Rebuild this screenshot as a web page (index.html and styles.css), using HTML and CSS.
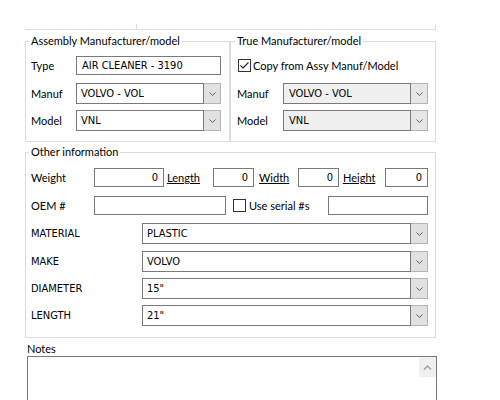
FILE: index.html
```html
<!DOCTYPE html>
<html lang="en">
<head>
  <meta charset="UTF-8" />
  <title>Part details</title>
  <link rel="stylesheet" href="styles.css">
</head>
<body>
  <div class="form">
    <div class="prev-groups">
      <div class="prev-box narrow"></div>
      <div class="prev-box wide"></div>
    </div>

    <div class="group-row">
      <fieldset class="group assembly">
        <legend>Assembly Manufacturer/model</legend>
        <div class="row short">
          <span class="label">Type</span>
          <div class="edit w145">AIR CLEANER - 3190</div>
        </div>
        <div class="row tall gap8">
          <span class="label">Manuf</span>
          <div class="combo w145">
            <span class="combo-text">VOLVO - VOL</span>
            <span class="combo-btn"><svg width="7" height="4" viewBox="0 0 7 4"><polyline points="0.5,0.5 3.5,3.5 6.5,0.5" /></svg></span>
          </div>
        </div>
        <div class="row tall gap6">
          <span class="label">Model</span>
          <div class="combo w145">
            <span class="combo-text">VNL</span>
            <span class="combo-btn"><svg width="7" height="4" viewBox="0 0 7 4"><polyline points="0.5,0.5 3.5,3.5 6.5,0.5" /></svg></span>
          </div>
        </div>
      </fieldset>

      <fieldset class="group true-manuf">
        <legend>True Manufacturer/model</legend>
        <div class="row short">
          <span class="check checked"><svg width="13" height="13" viewBox="0 0 13 13"><polyline points="2.5,6.5 5,9 10.5,3.5" /></svg></span>
          <span class="check-text">Copy from Assy Manuf/Model</span>
        </div>
        <div class="row tall gap8">
          <span class="label">Manuf</span>
          <div class="combo w145 disabled">
            <span class="combo-text">VOLVO - VOL</span>
            <span class="combo-btn"><svg width="7" height="4" viewBox="0 0 7 4"><polyline points="0.5,0.5 3.5,3.5 6.5,0.5" /></svg></span>
          </div>
        </div>
        <div class="row tall gap6">
          <span class="label">Model</span>
          <div class="combo w145 disabled">
            <span class="combo-text">VNL</span>
            <span class="combo-btn"><svg width="7" height="4" viewBox="0 0 7 4"><polyline points="0.5,0.5 3.5,3.5 6.5,0.5" /></svg></span>
          </div>
        </div>
      </fieldset>
    </div>

    <fieldset class="group other">
      <legend>Other information</legend>
      <div class="row short">
        <span class="label wide">Weight</span>
        <div class="edit num w70">0</div>
        <a class="link l-length">Length</a>
        <div class="edit num w41">0</div>
        <a class="link l-width">Width</a>
        <div class="edit num w41">0</div>
        <a class="link l-height">Height</a>
        <div class="edit num w43">0</div>
      </div>
      <div class="row short gap9">
        <span class="label wide">OEM #</span>
        <div class="edit w132"></div>
        <span class="check serial"></span>
        <span class="check-text">Use serial #s</span>
        <div class="edit w100 push"></div>
      </div>

      <div class="row tall gap8">
        <span class="label attr">MATERIAL</span>
        <div class="combo grow">
          <span class="combo-text">PLASTIC</span>
          <span class="combo-btn"><svg width="7" height="4" viewBox="0 0 7 4"><polyline points="0.5,0.5 3.5,3.5 6.5,0.5" /></svg></span>
        </div>
      </div>
      <div class="row tall gap7">
        <span class="label attr">MAKE</span>
        <div class="combo grow">
          <span class="combo-text">VOLVO</span>
          <span class="combo-btn"><svg width="7" height="4" viewBox="0 0 7 4"><polyline points="0.5,0.5 3.5,3.5 6.5,0.5" /></svg></span>
        </div>
      </div>
      <div class="row tall gap6">
        <span class="label attr">DIAMETER</span>
        <div class="combo grow">
          <span class="combo-text">15"</span>
          <span class="combo-btn"><svg width="7" height="4" viewBox="0 0 7 4"><polyline points="0.5,0.5 3.5,3.5 6.5,0.5" /></svg></span>
        </div>
      </div>
      <div class="row tall gap6">
        <span class="label attr">LENGTH</span>
        <div class="combo grow">
          <span class="combo-text">21"</span>
          <span class="combo-btn"><svg width="7" height="4" viewBox="0 0 7 4"><polyline points="0.5,0.5 3.5,3.5 6.5,0.5" /></svg></span>
        </div>
      </div>
    </fieldset>

    <div class="notes">
      <div class="notes-label">Notes</div>
      <div class="memo">
        <div class="memo-text"></div>
        <div class="scrollbar">
          <span class="scroll-up"><svg width="9" height="5" viewBox="0 0 9 5"><polyline points="1,4.5 4.5,1 8,4.5" /></svg></span>
        </div>
      </div>
    </div>
  </div>
</body>
</html>
```

FILE: styles.css
```css
* {
  box-sizing: border-box;
}

body {
  margin: 0;
  background: #fff;
  font-family: Lato, "Noto Sans", sans-serif;
  font-size: 11px;
  color: #000;
}

.form {
  width: 411px;
  margin-left: 25px;
}

/* bottom edge of the group boxes above (scrolled out of view) */
.prev-groups {
  display: flex;
  padding-top: 24px;
}

.prev-box {
  height: 6px;
  border-right: 1px solid #dcdcdc;
  border-bottom: 1px solid #dcdcdc;
}

.prev-box.narrow { width: 112px; }
.prev-box.wide { width: 299px; }

.group-row {
  display: flex;
  margin-top: 3px;
}

.group {
  margin: 0;
  border: 1px solid #dcdcdc;
  min-width: 0;
}

.group legend {
  padding: 0 2px;
  margin-left: -2px;
  line-height: 16px;
}

.assembly {
  width: 205px;
  padding: 7px 5px 10px 5px;
}

.true-manuf {
  width: 206px;
  padding: 7px 6px 10px 6px;
}

.other {
  width: 411px;
  margin-top: 2px;
  padding: 8px 7px 11px 5px;
}

.row {
  display: flex;
  align-items: center;
}

.row.short { height: 19px; }
.row.tall { height: 21px; }
.gap6 { margin-top: 6px; }
.gap7 { margin-top: 7px; }
.gap8 { margin-top: 8px; }
.gap9 { margin-top: 9px; }

.label {
  width: 45px;
  flex-shrink: 0;
}

.true-manuf .label { width: 46px; }
.label.wide { width: 63px; }

.label.attr {
  width: 111px;
  font-family: "DejaVu Sans Condensed", "DejaVu Sans", sans-serif;
  font-stretch: condensed;
  font-size: 11px;
}

/* text boxes */
.edit {
  height: 19px;
  border: 1px solid #7a7a7a;
  background: #fff;
  padding: 0 5px;
  line-height: 17px;
  font-family: "DejaVu Sans Condensed", "DejaVu Sans", sans-serif;
  font-stretch: condensed;
  font-size: 11px;
  white-space: nowrap;
}

.edit.num {
  text-align: right;
  padding-right: 5px;
}

.w41 { width: 41px; }
.w43 { width: 43px; }
.w70 { width: 70px; }
.w100 { width: 100px; }
.w132 { width: 132px; }
.w145 { width: 145px; }
.grow { flex: 1; }
.push { margin-left: auto; }

.link {
  color: #000;
  text-decoration: underline;
  flex-shrink: 0;
}

.l-length { margin-left: 3px; width: 46px; }
.l-width { margin-left: 5px; width: 39px; }
.l-height { margin-left: 4px; width: 42px; }

/* drop-down lists */
.combo {
  display: flex;
  height: 21px;
  font-family: "DejaVu Sans Condensed", "DejaVu Sans", sans-serif;
  font-stretch: condensed;
  font-size: 11px;
}

.combo-text {
  flex: 1;
  border: 1px solid #7a7a7a;
  background: #fff;
  padding: 0 4px;
  line-height: 19px;
  white-space: nowrap;
}

.combo-btn {
  width: 17px;
  display: flex;
  align-items: center;
  justify-content: center;
  background: #e1e1e1;
  border: 1px solid #b4b4b4;
  border-left: none;
}

.combo-btn polyline {
  fill: none;
  stroke: #5a5a5a;
  stroke-width: 1;
}

.combo.disabled .combo-text {
  background: #f0f0f0;
  padding-left: 5px;
}

.combo.disabled .combo-btn {
  background: #e6e6e6;
}

/* check boxes */
.check {
  width: 13px;
  height: 13px;
  flex-shrink: 0;
  border: 1px solid #333;
  background: #fff;
  margin-left: 1px;
}

.check svg {
  display: block;
  margin: -1px;
}

.check polyline {
  fill: none;
  stroke: #222;
  stroke-width: 1.1;
}

.check.serial { margin-left: 7px; }

.check-text {
  margin-left: 2px;
  white-space: nowrap;
}

.check.serial + .check-text { margin-left: 3px; }

/* notes memo */
.notes {
  margin-left: 2px;
  margin-top: 4px;
}

.notes-label {
  line-height: 14px;
}

.memo {
  display: flex;
  width: 410px;
  height: 70px;
  border: 1px solid #7a7a7a;
  background: #fff;
}

.memo-text {
  flex: 1;
}

.scrollbar {
  width: 17px;
  background: #fff;
}

.scroll-up {
  display: flex;
  align-items: center;
  justify-content: center;
  height: 20px;
  background: #f0f0f0;
}

.scroll-up polyline {
  fill: none;
  stroke: #a6a6a6;
  stroke-width: 1.6;
}
```
